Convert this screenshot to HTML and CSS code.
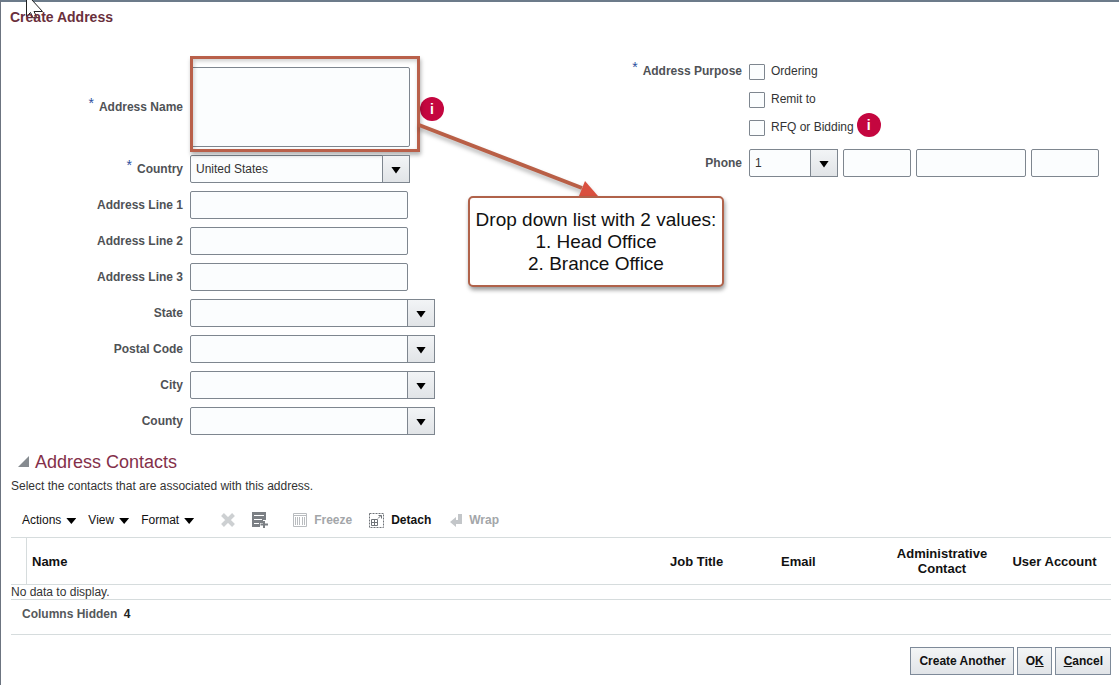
FILE: index.html
```
<!DOCTYPE html>
<html lang="en">
<head>
    <meta charset="UTF-8">
    <meta name="viewport" content="width=device-width, initial-scale=1.0">
    <title>Create Address</title>
    <link rel="stylesheet" href="styles.css">
</head>
<body>

    <svg class="cursor" width="20" height="22" viewBox="0 0 20 22">
        <path d="M2.5 -6 V16.5 L6.5 12.5 L9 18 L12.5 16.5 L10 11.5 H18.5 Z" fill="#fff" stroke="#222"/>
    </svg>

    <h1>Create Address</h1>

    <form class="address-form">
        <div class="fields">
            <label class="field-label" for="addressName"><span class="required">*</span>Address Name</label>
            <div class="name-cell">
                <textarea id="addressName"></textarea>
                <span class="info">i</span>
                <div class="highlight"></div>
            </div>

            <label class="field-label" for="country"><span class="required">*</span>Country</label>
            <div class="select select-country">
                <select id="country"><option>United States</option></select>
            </div>

            <label class="field-label" for="line1">Address Line 1</label>
            <input type="text" id="line1" class="text-input">

            <label class="field-label" for="line2">Address Line 2</label>
            <input type="text" id="line2" class="text-input">

            <label class="field-label" for="line3">Address Line 3</label>
            <input type="text" id="line3" class="text-input">

            <label class="field-label" for="state">State</label>
            <div class="select select-wide"><select id="state"><option></option></select></div>

            <label class="field-label" for="postal">Postal Code</label>
            <div class="select select-wide"><select id="postal"><option></option></select></div>

            <label class="field-label" for="city">City</label>
            <div class="select select-wide"><select id="city"><option></option></select></div>

            <label class="field-label" for="county">County</label>
            <div class="select select-wide"><select id="county"><option></option></select></div>
        </div>

        <div class="fields fields-right">
            <span class="field-label label-top" id="purposeLabel"><span class="required">*</span>Address Purpose</span>
            <div class="purpose" role="group" aria-labelledby="purposeLabel">
                <div class="check"><input type="checkbox" id="ordering"><label for="ordering">Ordering</label></div>
                <div class="check"><input type="checkbox" id="remit"><label for="remit">Remit to</label></div>
                <div class="check"><input type="checkbox" id="rfq"><label for="rfq">RFQ or Bidding</label><span class="info">i</span></div>
            </div>

            <label class="field-label" for="phoneCode">Phone</label>
            <div class="phone">
                <div class="select select-code"><select id="phoneCode"><option>1</option></select></div>
                <input type="text" class="phone-short" aria-label="Area code">
                <input type="text" class="phone-long" aria-label="Number">
                <input type="text" class="phone-short" aria-label="Extension">
            </div>
        </div>

        <!-- Annotation over the form -->
        <svg class="arrow" width="190" height="84" viewBox="0 0 190 84">
            <path d="M3 4 L166 67" stroke="#b95f46" stroke-width="4"/>
            <path d="M182 75 L163 75 L169 60 Z" fill="#d9503f"/>
        </svg>
        <div class="callout">Drop down list with 2 values:<br>1. Head Office<br>2. Brance Office</div>
    </form>

    <section class="contacts">
        <h2>
            <svg width="12" height="12" viewBox="0 0 12 12"><path d="M12 0 V11 H1 Z" fill="#868b90"/></svg>
            Address Contacts
        </h2>
        <p>Select the contacts that are associated with this address.</p>

        <div class="toolbar">
            <button type="button" class="menu">Actions</button>
            <button type="button" class="menu">View</button>
            <button type="button" class="menu">Format</button>

            <button type="button" class="tool tool-delete" aria-label="Delete" disabled>
                <svg width="14" height="14" viewBox="0 0 14 14"><path d="M1.500 1.500 L12.500 12.500 M12.500 1.500 L1.500 12.500" stroke="#cdd0d2" stroke-width="4"/></svg>
            </button>
            <button type="button" class="tool tool-add" aria-label="Add">
                <svg width="16" height="16" viewBox="0 0 16 16">
                    <path d="M0 0 H14 V8 H11 V11 H8 V15 H0 Z" fill="#7b7f84"/>
                    <path d="M2 3.500 H12 M2 7.500 H10 M2 11.500 H7" stroke="#fff"/>
                    <path d="M12 9 V16 M8.500 12.500 H16" stroke="#7b7f84" stroke-width="2"/>
                </svg>
            </button>
            <button type="button" class="tool tool-freeze" disabled>
                <svg width="14" height="14" viewBox="0 0 14 14" fill="none" stroke="#b9bcbf">
                    <path d="M.5 .5 H13.500 V13.500 H.5 Z M1 2.500 H13"/>
                    <path d="M2.500 4 V12 M4.500 4 V12 M6.500 4 V12 M9.500 4 V12 M11.500 4 V12"/>
                </svg>
                Freeze
            </button>
            <button type="button" class="tool tool-detach">
                <svg width="15" height="15" viewBox="0 0 15 15" fill="none" stroke="#6f7378">
                    <path d="M.5 .5 H14.500 V14.500 H.5 Z" stroke-dasharray="2 1"/>
                    <path d="M2.500 6.500 H8.500 V12.500 H2.500 Z M2.500 9.500 H8.500 M5.500 7 V12"/>
                    <path d="M9 5.500 L12 2.500 M9.500 2.500 H12.500 V5.500"/>
                </svg>
                Detach
            </button>
            <button type="button" class="tool tool-wrap" disabled>
                <svg width="12" height="14" viewBox="0 0 12 14"><path d="M8 1 H12 V11 H6 V14 L0 9 L6 4 V7 H8 Z" fill="#c3c6c9"/></svg>
                Wrap
            </button>
        </div>

        <table>
            <thead>
                <tr>
                    <th class="col-handle"></th>
                    <th class="col-name">Name</th>
                    <th class="col-job">Job Title</th>
                    <th class="col-email">Email</th>
                    <th class="col-admin">Administrative Contact</th>
                    <th class="col-user">User Account</th>
                </tr>
            </thead>
            <tbody>
                <tr><td colspan="6">No data to display.</td></tr>
            </tbody>
        </table>
        <div class="hidden-columns">Columns Hidden <span>4</span></div>

        <div class="buttons">
            <button type="button">Create Another</button>
            <button type="button">O<u>K</u></button>
            <button type="button"><u>C</u>ancel</button>
        </div>
    </section>

</body>
</html>
```
FILE: styles.css
```
*, *::before, *::after { box-sizing: border-box; }
body {
    margin: 0;
    min-height: 100vh;
    border-top: 2px solid #6c7b8a;
    border-left: 1px solid #6c7480;
    background: #fff;
    color: #333;
    font: 12px/16px "Liberation Sans", Arial, sans-serif;
}
input, select, textarea, button { font: inherit; margin: 0; }

.cursor { position: absolute; top: 0; left: 24px; }
h1 { position: relative; margin: 5px 0 30px 9px; font-size: 14px; line-height: 20px; color: #6a2f3c; }

/* Form */
.address-form { position: relative; display: grid; grid-template-columns: 1fr 1fr; align-items: start; }
.fields { display: grid; grid-template-columns: 182px 1fr; gap: 8px 7px; align-items: center; padding-top: 10px; }
.fields-right { padding-top: 0; }
.field-label { text-align: right; font-weight: bold; color: #4f5256; }
.label-top { align-self: start; line-height: 28px; }
.required { margin-right: 5px; font-weight: normal; font-size: 14px; line-height: 0; vertical-align: 3px; color: #2c4f9e; }

input[type="text"], textarea, select {
    height: 28px;
    border: 1px solid #7e868f;
    border-radius: 2px;
    background: #fbfdfe;
    color: #333;
}
.text-input { width: 218px; }
.name-cell { position: relative; display: flex; align-items: center; gap: 10px; }
textarea { display: block; width: 220px; height: 80px; resize: none; }
.name-cell .info { margin-top: 4px; }
.highlight {
    position: absolute;
    top: -11px;
    left: 0;
    width: 230px;
    height: 96px;
    border: 3px solid #b9604a;
    box-shadow: 1px 3px 4px rgba(0,0,0,0.3), inset 1px 2px 4px rgba(0,0,0,0.2);
    pointer-events: none;
}
.info {
    width: 24px;
    height: 24px;
    border-radius: 50%;
    background: #c4063f;
    color: #fff;
    font-size: 14px;
    font-weight: bold;
    line-height: 24px;
    text-align: center;
}

/* Drop-downs: the arrow box shares the grid cell with the select */
.select { display: grid; }
.select select { grid-area: 1 / 1; width: 100%; padding: 0 32px 0 5px; appearance: none; }
.select::before, .select::after { content: ""; grid-area: 1 / 1; z-index: 1; justify-self: end; pointer-events: none; }
.select::before {
    width: 28px;
    border: 1px solid #7e868f;
    background: linear-gradient(#f2f4f6, #e1e4e7);
}
.select::after {
    align-self: center;
    width: 10px;
    height: 7px;
    margin: 2px 9px 0 0;
    background: #000;
    clip-path: polygon(0 0, 100% 0, 50% 100%);
}
.select-country { width: 220px; }
.select-wide { width: 245px; }
.select-code { width: 89px; }

.check { display: flex; align-items: center; height: 28px; }
.check label { margin: 0 3px 0 6px; }
.check .info { margin-bottom: 4px; }
.check input {
    width: 16px;
    height: 16px;
    margin-top: 2px;
    border: 1px solid #7e868f;
    border-radius: 1px;
    background: #fbfdfe;
    appearance: none;
}
.phone { display: flex; gap: 5px; }
.phone-short { width: 68px; }
.phone-long { width: 110px; }

/* Annotation */
.arrow { position: absolute; top: 64px; left: 415px; filter: drop-shadow(0 3px 2px rgba(0,0,0,0.3)); pointer-events: none; }
.callout {
    position: absolute;
    top: 139px;
    left: 467px;
    width: 256px;
    padding: 11px 0 10px;
    border: 2px solid #b0624a;
    border-radius: 5px;
    background: #fff;
    box-shadow: 1px 3px 4px rgba(0,0,0,0.4);
    color: #111;
    font-size: 19px;
    line-height: 22px;
    text-align: center;
    white-space: nowrap;
}

/* Contacts */
.contacts { padding: 0 8px 10px 10px; }
h2 {
    display: flex;
    align-items: center;
    gap: 6px;
    margin: 16px 0 5px 6px;
    font-size: 18px;
    font-weight: normal;
    line-height: 22px;
    color: #84304a;
}
.contacts p { margin: 0 0 9px; }
.toolbar { display: flex; align-items: center; height: 34px; padding-left: 11px; }
.toolbar button { display: flex; align-items: center; padding: 0; border: 0; background: none; color: #111; }
.menu { gap: 5px; margin-right: 12px; }
.menu::after { content: ""; width: 10px; height: 6px; margin-top: 2px; background: #000; clip-path: polygon(0 0, 100% 0, 50% 100%); }
.toolbar .tool { gap: 7px; margin-right: 17px; font-weight: bold; }
.toolbar .tool:disabled { color: #a3a6a9; }
.toolbar .tool-delete { margin-left: 15px; }
.toolbar .tool-add { margin-right: 25px; }
.toolbar .tool-detach { margin-right: 19px; }

table { width: 100%; border-collapse: separate; border-spacing: 0; table-layout: fixed; }
th { height: 48px; padding: 0 5px; border: solid #d6dcdd; border-width: 1px 0; font-size: 13px; line-height: 15px; color: #111; }
td { padding: 0; border-bottom: 1px solid #d6dcdd; line-height: 14px; }
.col-handle { width: 16px; padding: 0; border-right-width: 1px; }
.col-name, .col-job, .col-email { text-align: left; }
.col-job { width: 111px; }
.col-email { width: 110px; }
.col-admin { width: 112px; }
.col-user { width: 113px; }
.hidden-columns { height: 35px; padding: 6px 11px; border-bottom: 1px solid #d6dcdd; font-weight: bold; color: #55585b; }
.hidden-columns span { margin-left: 3px; color: #222; }

.buttons { display: flex; justify-content: flex-end; gap: 3px; margin-top: 12px; }
.buttons button {
    height: 28px;
    padding: 0 7px 0 8px;
    border: 1px solid #7e8a99;
    background: linear-gradient(#f3f5f6, #e1e4e8);
    color: #111;
    font-weight: bold;
}
```
